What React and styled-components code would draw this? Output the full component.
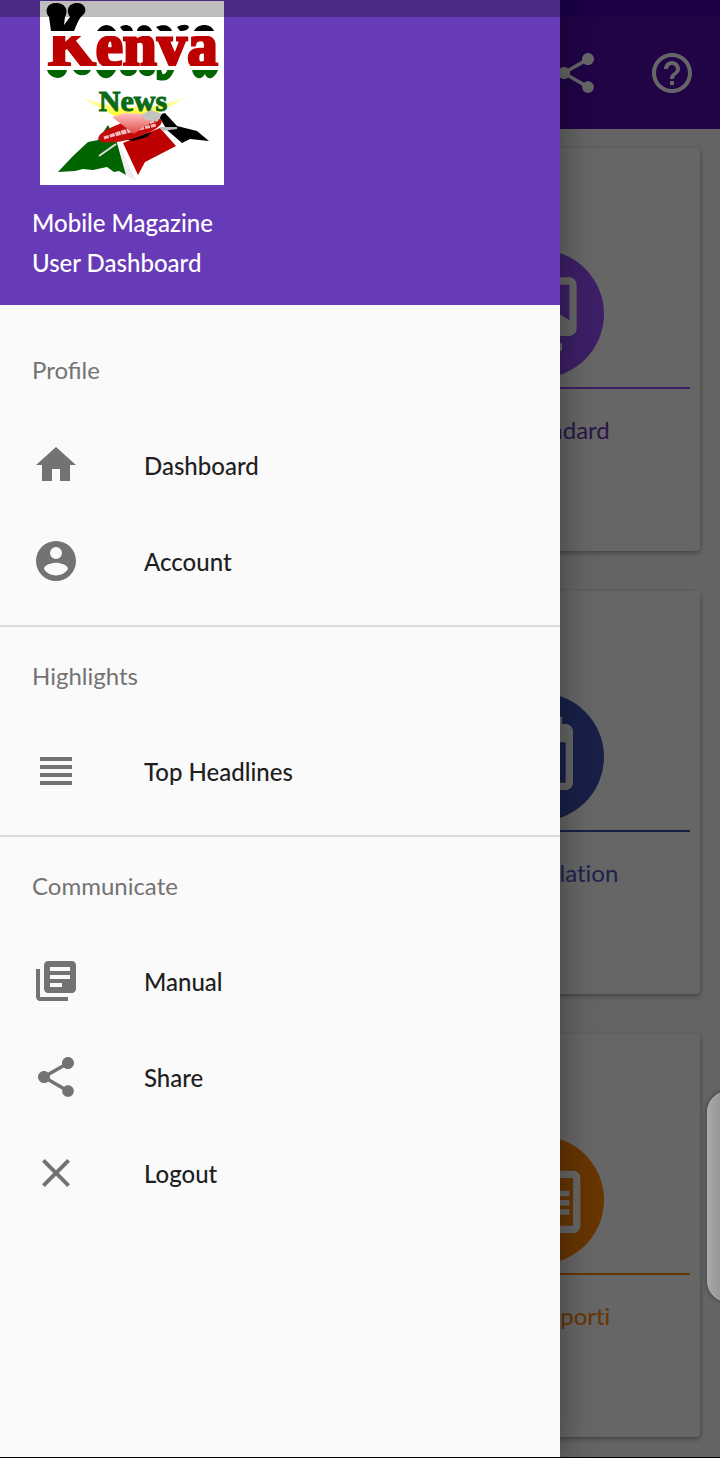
import React from "react";
import styled, { createGlobalStyle } from "styled-components";
import {
  MdChromeReaderMode,
  MdClose,
  MdHelpOutline,
  MdHome,
  MdLibraryBooks,
  MdShare,
  MdToday,
  MdViewHeadline,
} from "react-icons/md";

const GlobalStyle = createGlobalStyle`
  *, *::before, *::after { box-sizing: border-box; }
  body {
    margin: 0;
    background: #fafafa;
    font-family: Lato, "Open Sans", sans-serif;
    font-size: 24px;
    line-height: 40px;
  }
`;

const Screen = styled.div`
  position: relative;
  display: flex;
  flex-direction: column;
  min-height: 100vh;
  overflow: hidden;
`;

const StatusStrip = styled.div`
  height: 17px;
  background: #4500ac;
`;

const Toolbar = styled.header`
  display: flex;
  align-items: center;
  justify-content: flex-end;
  gap: 48px;
  height: 112px;
  padding: 0 24px;
  background: #500cb0;
`;

const ToolButton = styled.button`
  display: flex;
  padding: 0;
  border: 0;
  background: none;
  color: #ffffff;
  font-size: 48px;
`;

const CardGrid = styled.main`
  flex: 1;
  display: grid;
  grid-template-columns: 1fr 1fr;
  align-content: start;
  gap: 40px;
  padding: 19px 20px 20px;
`;

const Card = styled.a`
  display: flex;
  flex-direction: column;
  align-items: center;
  min-height: 403px;
  padding: 102px 10px 0;
  border-radius: 4px;
  background: #ffffff;
  box-shadow: 0 2px 5px rgba(0, 0, 0, 0.35);
  color: ${(p) => p.$text};
  font-variant-ligatures: none;
  text-decoration: none;
`;

const Disc = styled.span`
  display: flex;
  align-items: center;
  justify-content: center;
  width: 128px;
  height: 128px;
  border-radius: 50%;
  background: ${(p) => p.$color};
  color: #ffffff;
  font-size: 88px;
`;

const CardRule = styled.span`
  align-self: stretch;
  height: 2px;
  margin: 9px 0 21px;
  background: ${(p) => p.$color};
`;

const NavEdge = styled.div`
  position: relative;
  z-index: 4;
  height: 1px;
  background: #000000;
`;

const Scrim = styled.div`
  position: absolute;
  inset: 0;
  z-index: 1;
  background: rgba(0, 0, 0, 0.6);
`;

const Drawer = styled.aside`
  position: absolute;
  inset: 0 auto 1px 0;
  z-index: 2;
  width: calc(100% - 160px);
  max-width: 640px;
  background: #fafafa;
  box-shadow: 0 0 32px rgba(0, 0, 0, 0.4);
`;

const DrawerHeader = styled.div`
  height: 305px;
  padding: 1px 32px 0;
  background: #673ab7;
  color: #ffffff;
  font-weight: 500;
`;

const LogoSvg = styled.svg`
  display: block;
  margin: 0 8px 18px;
`;

const HeaderLine = styled.p`
  margin: 0;
`;

const StatusShade = styled.div`
  position: absolute;
  inset: 0 0 auto;
  height: 17px;
  background: rgba(0, 0, 0, 0.26);
`;

const Menu = styled.nav`
  padding-top: 16px;
`;

const MenuGroup = styled.section`
  & + & {
    margin-top: 16px;
    border-top: 2px solid #dcdcdc;
  }
`;

const GroupTitle = styled.h2`
  margin: 0;
  padding: 0 32px;
  color: #737373;
  font-size: 24px;
  font-weight: 400;
  line-height: 98px;
  height: 96px;
`;

const MenuItem = styled.a`
  display: flex;
  align-items: center;
  gap: 64px;
  height: 96px;
  padding: 0 32px;
  color: #1f1f1f;
  font-weight: 500;
  text-decoration: none;

  svg {
    flex: none;
    color: #737373;
    font-size: 48px;
  }
`;

const ItemLabel = styled.span`
  padding-top: 2px;
`;

const EdgeHandle = styled.div`
  position: absolute;
  top: 1091px;
  right: -29px;
  z-index: 3;
  width: 42px;
  height: 211px;
  border: 1px solid #b0b0b0;
  border-radius: 28px;
  background: linear-gradient(90deg, #a8a8a8, #999999 10px);
  box-shadow: 0 0 5px rgba(0, 0, 0, 0.4);
`;

const ReaderScreenIcon = () => (
  <svg width="1em" height="1em" viewBox="0 0 24 24" fill="currentColor" aria-hidden="true">
    <path
      fillRule="evenodd"
      d="M4 2h16a2 2 0 0 1 2 2v12a2 2 0 0 1-2 2H4a2 2 0 0 1-2-2V4c0-1.100.9-2 2-2zM4 4v9.700L12 8.700l8 5V4z"
    />
    <path d="M6 20h12v2H6z" />
  </svg>
);

const AccountIcon = () => (
  <svg width="1em" height="1em" viewBox="0 0 24 24" fill="currentColor" aria-hidden="true">
    <path
      fillRule="evenodd"
      d="M12 2a10 10 0 1 0 0 20 10 10 0 0 0 0-20zM12 5a3 3 0 1 1 0 6 3 3 0 0 1 0-6zM12 19.200c-2.500 0-4.710-1.280-6-3.220.03-1.990 4-3.080 6-3.080s5.970 1.090 6 3.080c-1.290 1.940-3.500 3.220-6 3.220z"
    />
  </svg>
);

const KenyaLogo = () => (
  <LogoSvg width="184" height="184" viewBox="0 0 184 184" role="img" aria-label="Kenya News">
    <defs>
      <linearGradient id="flag" gradientUnits="userSpaceOnUse" x1="0" y1="0" x2="0" y2="100">
        <stop offset="0.35" stopColor="#bd0000" stopOpacity="0" />
        <stop offset="0.35" stopColor="#bd0000" />
        <stop offset="0.645" stopColor="#bd0000" />
        <stop offset="0.645" stopColor="#fff" />
        <stop offset="0.69" stopColor="#fff" />
        <stop offset="0.69" stopColor="#006400" />
      </linearGradient>
      <linearGradient id="glow" x1="0" y1="0" x2="0" y2="1">
        <stop offset="0" stopColor="#fffbd0" />
        <stop offset="0.7" stopColor="#ffff20" />
      </linearGradient>
      <linearGradient id="dome" x1="0" y1="0" x2="0" y2="1">
        <stop offset="0" stopColor="#ffc4c4" />
        <stop offset="1" stopColor="#e04848" />
      </linearGradient>
    </defs>
    <rect width="184" height="184" fill="#fff" />
    <g fill="#000">
      <path d="M11 30 9 16C4 10 7 2 16 2s13 7 9 14l-1 8 6-8C25 9 29 2 37 2s11 8 6 12c-4 3-6 9-9 16z" />
      <path d="M57 30c5-8 14-8 19 0zM80 26c5-4 12-2 13 4H83zM97 30c1-7 12-8 15 0zM116 26c7-3 14-2 16 4h-12zM137 26c5-3 11-3 12 0-1 3-4 4-9 4zM154 30c4-8 17-8 20 0z" />
    </g>
    <g fill="#006400">
      <path d="M7 69h20c-2 11-17 10-20 0zM33 69h18c-3 7-14 7-18 0zM56 69h20c-5 11-15 11-20 0zM80 69h17c-2 8-15 8-17 0zM99 69h16c-1 8-14 8-16 0zM152 69h26c-3 8-10 12-13 4-4 7-11 5-13-4z" />
    </g>
    <path d="m42 97 31 17 22 8 20-8 30-17-35 9H76z" fill="url(#glow)" />
    <text
      x="93"
      y="65"
      textAnchor="middle"
      fontFamily="Liberation Serif, serif"
      fontWeight="700"
      fontSize="61"
      fill="url(#flag)"
      stroke="url(#flag)"
      strokeWidth="3"
    >
      Kenya
    </text>
    <text
      x="93"
      y="110"
      textAnchor="middle"
      fontFamily="Liberation Serif, serif"
      fontWeight="700"
      fontSize="30"
      fill="#0b6a16"
      stroke="#0b6a16"
      strokeWidth="1"
    >
      News
    </text>
    <path d="m18 171 14-15 16-15 10-2 10-15 9 18 9 32-7-4-5 1-7-5-14 3-10-1-8 2z" fill="#006400" />
    <path d="m78 142 18 37-9-3z" fill="#eee" />
    <path d="m83 142 37-15 16 18-31 16-7 13z" fill="#bd0000" />
    <path d="m118 114 7-2 12 13 20 5 12 10-19-2-8 4-15-13z" fill="#000" />
    <path d="m120 126 17 0 0 2-15 2z" fill="#bbb" />
    <path d="m84 138 28-7-5 5-14 4z" fill="#000" />
    <ellipse cx="90" cy="129" rx="33" ry="9" transform="rotate(-16 90 129)" fill="#c40c0c" />
    <path d="m64 137 53-18M70 135l46-11" stroke="#f3bcbc" strokeWidth="3" strokeDasharray="5 1" />
    <path d="m72 116 12-4 22 1 7 6-19 14z" fill="url(#dome)" />
    <path d="m101 114 10-5 11 4-4 7-12-1z" fill="#c3c3c3" />
    <path d="m59 155 17-12" stroke="#ddd" strokeWidth="2" />
  </LogoSvg>
);

const CARDS = [
  { title: "Digital Edition" },
  { title: "The Standard", color: "#964eff", text: "#673ab7", Icon: ReaderScreenIcon },
  { title: "The Star" },
  { title: "Kenya Relation", color: "#3f51b5", text: "#4a55c4", Icon: MdToday },
  { title: "Business" },
  { title: "MwanaSporti", color: "#ff8400", text: "#ff8400", Icon: MdChromeReaderMode },
];

const MENU = [
  {
    title: "Profile",
    items: [
      { label: "Dashboard", Icon: MdHome },
      { label: "Account", Icon: AccountIcon },
    ],
  },
  { title: "Highlights", items: [{ label: "Top Headlines", Icon: MdViewHeadline }] },
  {
    title: "Communicate",
    items: [
      { label: "Manual", Icon: MdLibraryBooks },
      { label: "Share", Icon: MdShare },
      { label: "Logout", Icon: MdClose },
    ],
  },
];

export default function App() {
  return (
    <>
      <GlobalStyle />
      <Screen>
        <StatusStrip />
        <Toolbar>
          <ToolButton type="button" aria-label="Share">
            <MdShare />
          </ToolButton>
          <ToolButton type="button" aria-label="Help">
            <MdHelpOutline />
          </ToolButton>
        </Toolbar>
        <CardGrid>
          {CARDS.map(({ title, color, text, Icon }) =>
            Icon ? (
              <Card key={title} href="#" $text={text}>
                <Disc $color={color}>
                  <Icon />
                </Disc>
                <CardRule $color={color} />
                {title}
              </Card>
            ) : (
              <Card key={title} as="div" aria-hidden="true" />
            )
          )}
        </CardGrid>
        <NavEdge />
        <Scrim />
        <Drawer>
          <DrawerHeader>
            <KenyaLogo />
            <HeaderLine>Mobile Magazine</HeaderLine>
            <HeaderLine>User Dashboard</HeaderLine>
          </DrawerHeader>
          <StatusShade />
          <Menu>
            {MENU.map((group) => (
              <MenuGroup key={group.title}>
                <GroupTitle>{group.title}</GroupTitle>
                {group.items.map(({ label, Icon }) => (
                  <MenuItem key={label} href="#">
                    <Icon />
                    <ItemLabel>{label}</ItemLabel>
                  </MenuItem>
                ))}
              </MenuGroup>
            ))}
          </Menu>
        </Drawer>
        <EdgeHandle />
      </Screen>
    </>
  );
}
